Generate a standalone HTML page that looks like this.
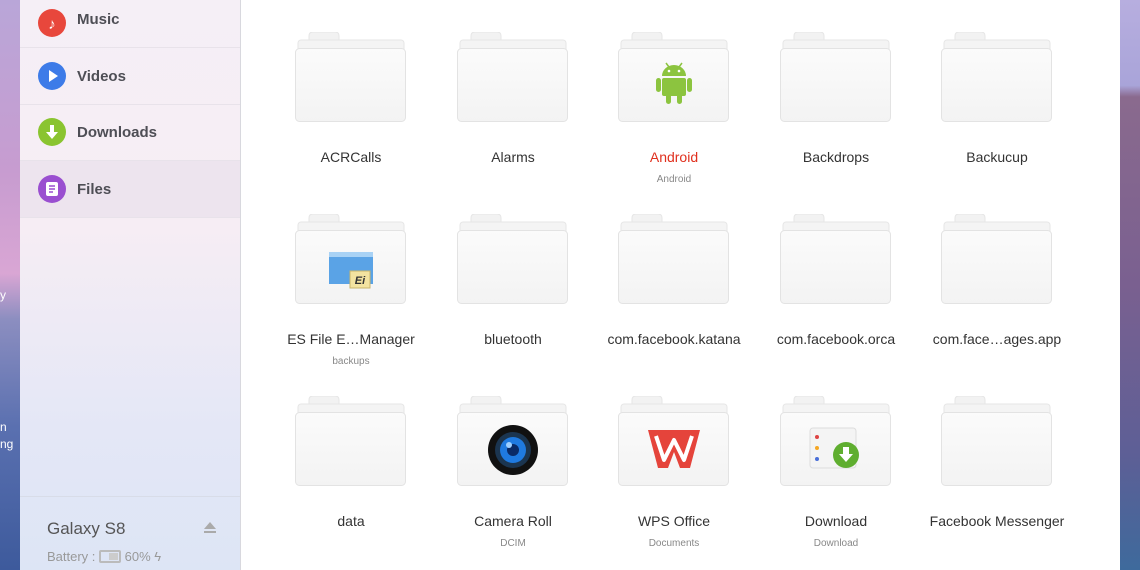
<!DOCTYPE html>
<html><head><meta charset="utf-8"><style>
*{margin:0;padding:0;box-sizing:border-box}
body{width:1140px;height:570px;overflow:hidden;position:relative;font-family:"Liberation Sans",Arial,sans-serif;background:#fff}
.dl{position:absolute;left:0;top:0;width:20px;height:570px;background:linear-gradient(#b9a6d8 0%,#c79cd0 30%,#d9a6d4 48%,#8c8ec0 56%,#5a70b0 75%,#3d5a9c 100%)}
.dr{position:absolute;left:1120px;top:0;width:20px;height:570px;background:linear-gradient(#b7aedf 0%,#a9a4d9 15%,#8a6a8e 17%,#7a6090 50%,#5d5f96 80%,#3e6a9c 100%)}
.sb{position:absolute;left:20px;top:0;width:221px;height:570px;background:linear-gradient(#f5eff6 0%,#f6edf4 40%,#e4e7f6 75%,#dde5f5 100%);border-right:1px solid #d8d8de}
.it{position:absolute;left:0;width:220px;height:57px;border-bottom:1px solid #e8e2ea}
.it .ic{position:absolute;left:18px;top:50%;margin-top:-14px;width:28px;height:28px;border-radius:50%}
.it span{position:absolute;left:57px;top:0;line-height:57px;font-size:15px;font-weight:bold;color:#4e4e55}
.f{position:absolute;width:112px;height:92px}
.lb{position:absolute;width:160px;text-align:center;font-size:14px;color:#333}
.sl{position:absolute;width:160px;text-align:center;font-size:10px;color:#888}
</style></head><body>
<div class="dl"><div style="position:absolute;left:0;top:288px;color:#fff;font-size:12px">y</div><div style="position:absolute;left:0;top:420px;color:#fff;font-size:12px">n</div><div style="position:absolute;left:0;top:437px;color:#fff;font-size:12px">ng</div></div>
<div class="dr"></div>
<div class="sb">
 <div class="it" style="top:-9px"><div class="ic" style="background:#e8473c;margin-top:-10px"><svg width="28" height="28"><text x="14" y="20" fill="#fff" font-size="15" text-anchor="middle">♪</text></svg></div><span style="top:4px;line-height:49px">Music</span></div>
 <div class="it" style="top:48px"><div class="ic" style="background:#3d7be8"><svg width="28" height="28"><path d="M11 8 L20 14 L11 20Z" fill="#fff"/></svg></div><span>Videos</span></div>
 <div class="it" style="top:104px"><div class="ic" style="background:#8ac430"><svg width="28" height="28"><path d="M12 7h4v7h4l-6 7-6-7h4z" fill="#fff"/></svg></div><span>Downloads</span></div>
 <div class="it" style="top:161px;background:#ede4ee"><div class="ic" style="background:#9a4fd0"><svg width="28" height="28"><rect x="8" y="7" width="12" height="14" rx="2" fill="#fff"/><path d="M11 11h6M11 14h6M11 17h4" stroke="#9a4fd0" stroke-width="1.5"/></svg></div><span>Files</span></div>
 <div style="position:absolute;left:0;top:496px;width:220px;border-top:1px solid #d8dce8"></div>
 <div style="position:absolute;left:27px;top:519px;font-size:17px;color:#555">Galaxy S8</div>
 <div style="position:absolute;left:184px;top:522px;width:0;height:0;border-left:6px solid transparent;border-right:6px solid transparent;border-bottom:7px solid #aaa"></div>
 <div style="position:absolute;left:184px;top:531px;width:12px;height:2px;background:#aaa"></div>
 <div style="position:absolute;left:27px;top:549px;font-size:13px;color:#999">Battery : <span style="display:inline-block;width:22px;height:13px;border:2px solid #bbb;border-radius:2px;vertical-align:-2px;position:relative"><span style="position:absolute;right:1px;top:1px;width:9px;height:7px;background:#ccc"></span></span> 60% ϟ</div>
</div>
<svg width="0" height="0" style="position:absolute"><defs>
<linearGradient id="g" x1="0" y1="0" x2="0" y2="1"><stop offset="0" stop-color="#fbfbfb"/><stop offset="1" stop-color="#f3f3f3"/></linearGradient>
<symbol id="fd" viewBox="0 0 112 92"><path d="M14 4 Q14 0 18 0 H40 Q44 0 44 4 V10 H14Z" fill="#f2f2f2" stroke="#e6e6e6"/><rect x="3" y="8" width="106" height="14" rx="3" fill="#f4f4f4" stroke="#e6e6e6"/><rect x="0.5" y="16.5" width="110" height="73" rx="4" fill="url(#g)" stroke="#e3e3e3"/></symbol>
</defs></svg>
<div id="grid"></div>
<script>
var cols=[351,513,674,836,997],rows=[32,214,396];
var d=[["ACRCalls"],["Alarms"],["Android","Android","and"],["Backdrops"],["Backucup"],
["ES File E…Manager","backups","es"],["bluetooth"],["com.facebook.katana"],["com.facebook.orca"],["com.face…ages.app"],
["data"],["Camera Roll","DCIM","cam"],["WPS Office","Documents","wps"],["Download","Download","dl"],["Facebook Messenger"]];
var icons={
and:'<g fill="#8cc43f"><path d="M44 44 a12 11 0 0 1 24 0z"/><rect x="44" y="46" width="24" height="18" rx="2"/><rect x="38" y="46" width="5" height="14" rx="2.5"/><rect x="69" y="46" width="5" height="14" rx="2.5"/><rect x="48" y="60" width="5" height="12" rx="2.5"/><rect x="59" y="60" width="5" height="12" rx="2.5"/><path d="M48 31 l3 4 M64 31 l-3 4" stroke="#8cc43f" stroke-width="1.5"/></g><circle cx="51" cy="39" r="1.3" fill="#fff"/><circle cx="61" cy="39" r="1.3" fill="#fff"/>',
es:'<path d="M34 40 h44 v30 h-44z" fill="#5aa3e6"/><path d="M34 38 h44 v5 h-44z" fill="#a8d2f5"/><rect x="55" y="57" width="20" height="17" fill="#f3e3a0" stroke="#c9b56a"/><text x="65" y="70" font-size="11" font-style="italic" font-weight="bold" text-anchor="middle" fill="#333">Ei</text>',
cam:'<circle cx="56" cy="54" r="25" fill="#111"/><circle cx="56" cy="54" r="18" fill="#1b3550"/><circle cx="56" cy="54" r="13" fill="#1f7ae0"/><circle cx="56" cy="54" r="6" fill="#0a2a66"/><circle cx="52" cy="49" r="3" fill="#9fd0ff"/>',
wps:'<path d="M30 34 H82 L72 72 H62 L56 56 L50 72 H40Z" fill="#e5443b"/><path d="M38 40 L46 64 L56 44 L66 64 L74 40" stroke="#fff" stroke-width="4" fill="none" stroke-linejoin="round"/>',
dl:'<rect x="30" y="32" width="46" height="40" rx="3" fill="#f4f4f4" stroke="#ddd"/><circle cx="37" cy="41" r="2" fill="#d44"/><circle cx="37" cy="52" r="2" fill="#f5a623"/><circle cx="37" cy="63" r="2" fill="#4a6fd8"/><circle cx="66" cy="59" r="13" fill="#5fae2f"/><path d="M63 51h6v7h4l-7 8-7-8h4z" fill="#fff"/>'};
var h='';
d.forEach(function(x,i){var c=cols[i%5],t=rows[Math.floor(i/5)];
h+='<svg class="f" style="left:'+(c-56)+'px;top:'+t+'px" viewBox="0 0 112 92"><use href="#fd"/>'+(x[2]?icons[x[2]]:'')+'</svg>';
h+='<div class="lb" style="left:'+(c-80)+'px;top:'+(t+117)+'px;'+(x[0]=="Android"?'color:#e0301e':'')+'">'+x[0]+'</div>';
if(x[1])h+='<div class="sl" style="left:'+(c-80)+'px;top:'+(t+142)+'px">'+x[1]+'</div>';});
document.getElementById('grid').innerHTML=h;
</script>
</body></html>
